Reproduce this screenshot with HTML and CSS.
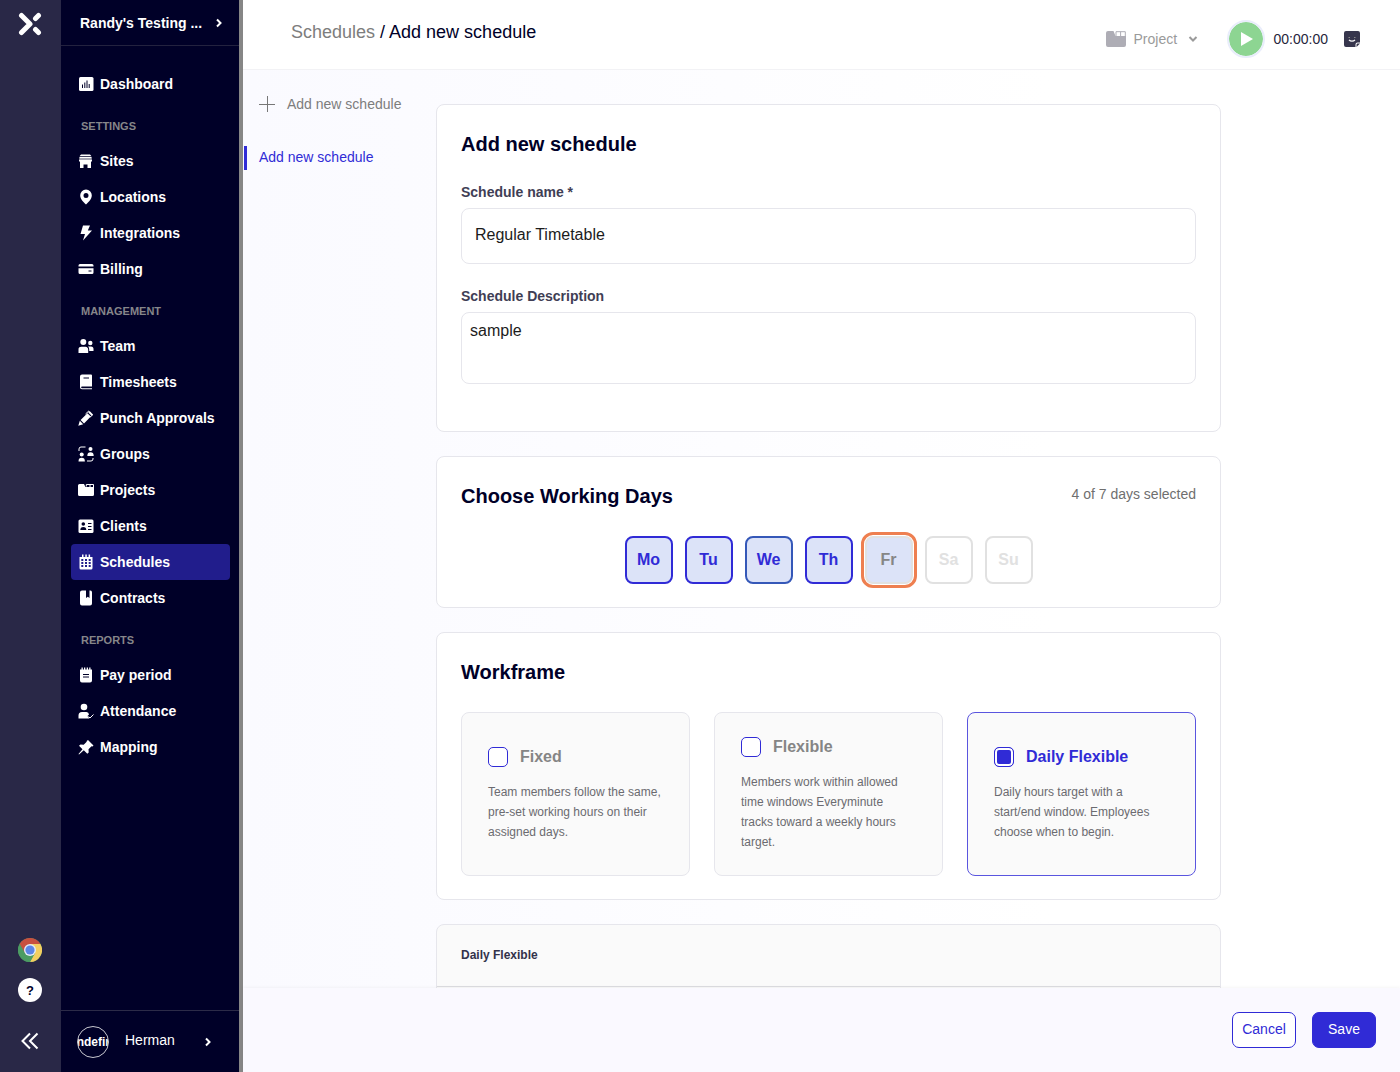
FILE: index.html
```html
<!DOCTYPE html>
<html lang="en">
<head>
  <meta charset="UTF-8" />
  <title>Add new schedule</title>
  <meta name="viewport" content="width=device-width, initial-scale=1.0" />
  <link rel="stylesheet" href="styles.css">
</head>
<body>
  <div class="rail">
    <svg class="logo" viewBox="0 0 24 24" width="24" height="24" fill="none" stroke="#fff" stroke-width="5" stroke-linecap="round">
      <path d="M3.5 3.5L12 12L3.5 20.5M17.500 6.500l3-3M17.500 17.500l3 3" stroke-linejoin="round"/>
    </svg>
    <div class="rail-bottom">
      <a href="#" aria-label="Chrome extension">
        <svg viewBox="0 0 24 24" width="24" height="24">
          <circle cx="12" cy="12" r="12" fill="#4c9c63"/>
          <path d="M12 6h10.4A12 12 0 0 1 12 24l5.2-9z" fill="#f3cf60"/>
          <path d="M1.6 6L6.8 15L12 12L12 6h10.4A12 12 0 0 0 1.6 6z" fill="#c8503f"/>
          <path d="M1.6 6L6.8 15L12 18l3 0L12 24A12 12 0 0 1 1.6 6z" fill="#4c9c63"/>
          <circle cx="12" cy="12" r="6" fill="#e4ebf7"/>
          <circle cx="12" cy="12" r="4.6" fill="#5c86e6"/>
        </svg>
      </a>
      <button class="help">?</button>
      <button class="collapse" aria-label="Collapse menu">
        <svg viewBox="0 0 18 18" width="18" height="18" fill="none" stroke="#fff" stroke-width="2"><path d="M9 1.5L1.5 9L9 16.5M16.5 1.5L9 9l7.5 7.5"/></svg>
      </button>
    </div>
  </div>

  <aside class="sidebar">
    <button class="workspace">
      <span>Randy's Testing ...</span>
      <svg viewBox="0 0 6 10" width="6" height="10" class="chevron"><path d="M1 1.5L4.5 5L1 8.5"/></svg>
    </button>

    <nav class="menu">
      <a href="#">
        <svg viewBox="0 0 16 16"><rect x="1" y="1" width="14.5" height="14" rx="1.5"/><path class="cut" d="M4.5 12V8.500M6.800 12V6.500M9 12V4.500M11.200 12V8"/></svg>
        Dashboard
      </a>
      <h3>SETTINGS</h3>
      <a href="#">
        <svg viewBox="0 0 16 16"><path d="M3 1.500h9l1.500 1.800h-12zM1.500 4h12l.5 3.500v1H1v-1zM2 8.500h11V15H9.500v-3.500h-4V15H2z"/><path class="cut" d="M1 6h13" stroke-width=".7"/></svg>
        Sites
      </a>
      <a href="#">
        <svg viewBox="0 0 16 16"><path fill-rule="evenodd" d="M8 .5a5.800 5.800 0 0 0-5.800 5.800C2.200 10.500 6 13.500 8 15.500c2-2 5.800-5 5.800-9.200A5.800 5.800 0 0 0 8 .5zm0 3.500a2.500 2.500 0 1 1 0 5 2.500 2.500 0 0 1 0-5z"/></svg>
        Locations
      </a>
      <a href="#">
        <svg viewBox="0 0 16 16"><path d="M5 .5h7L9.800 5.500H14L5 15.500l2-6.500H2.500z"/></svg>
        Integrations
      </a>
      <a href="#">
        <svg viewBox="0 0 16 16"><path d="M2 3h12a1.500 1.500 0 0 1 1.500 1.500V5.500H.5v-1A1.500 1.500 0 0 1 2 3zM.5 7.200h15v4.300A1.500 1.500 0 0 1 14 13H2a1.500 1.500 0 0 1-1.500-1.500z"/><path class="cut" d="M10.500 10h3"/></svg>
        Billing
      </a>
      <h3>MANAGEMENT</h3>
      <a href="#">
        <svg viewBox="0 0 16 16"><circle cx="5.300" cy="4" r="3"/><circle cx="12.300" cy="5" r="2.200"/><path d="M.5 15v-3a3 3 0 0 1 3-3.300h4a3 3 0 0 1 2.700 3V15zM10 8.500h3a2.500 2.500 0 0 1 2.500 2.500v2h-4.300v-1.500A4 4 0 0 0 10 8.500z"/></svg>
        Team
      </a>
      <a href="#">
        <svg viewBox="0 0 16 16"><path fill-rule="evenodd" d="M4 .5h9a1 1 0 0 1 1 1v11H4a.8.8 0 0 0 0 1.700h10v1H4a2 2 0 0 1-2-2V2.500a2 2 0 0 1 2-2z"/><path class="cut" d="M5.500 4h5.500"/></svg>
        Timesheets
      </a>
      <a href="#">
        <svg viewBox="0 0 16 16"><path d="M.3 15.700L1.800 10.800L5.200 14.200zM2.600 10L9.400 3.200L12.800 6.600L6 13.400zM10.200 2.400L11.600 1l3.400 3.400L13.600 5.800z"/><path d="M7.500 4L11 .8M12 7.200l3-2.700" fill="none" stroke="#fff"/></svg>
        Punch Approvals
      </a>
      <a href="#">
        <svg viewBox="0 0 16 16"><circle cx="3.700" cy="8.500" r="2"/><path d="M.5 15.500c0-3 1.200-3.800 3.200-3.800s3.200.8 3.200 3.800z"/><circle cx="12.500" cy="3" r="2"/><path d="M9.300 10c0-3 1.200-3.800 3.200-3.800s3.200.8 3.200 3.800z"/><path d="M1 5V3a2 2 0 0 1 2-2h4.500M15 12v1a2 2 0 0 1-2 2H9" fill="none" stroke="#fff"/></svg>
        Groups
      </a>
      <a href="#">
        <svg viewBox="0 0 16 16"><path d="M0 3.500A1.500 1.500 0 0 1 1.500 2H6l1.500 3H16v7.500a1.500 1.500 0 0 1-1.500 1.500h-13A1.500 1.500 0 0 1 0 12.500z"/><path d="M8.300 4.500v-2H15.500v3M12 2.500v3" fill="none" stroke="#fff"/></svg>
        Projects
      </a>
      <a href="#">
        <svg viewBox="0 0 16 16"><rect x=".5" y="1.500" width="15" height="13.500" rx="1.500"/><circle cx="5.300" cy="6" r="1.800" fill="#000028"/><path d="M2.300 12c0-2 1-3 3-3s3 1 3 3z" fill="#000028"/><path class="cut" d="M10 5.500h3.500M10 8.500h3.500M10 11.500h3.500"/></svg>
        Clients
      </a>
      <a href="#" class="active">
        <svg viewBox="0 0 16 16"><path d="M1.500 3h13v11a1.500 1.500 0 0 1-1.500 1.500H3A1.500 1.500 0 0 1 1.500 14zM4 .5h1.500v3H4zM7.300.5h1.500v3H7.300zM10.600.5h1.500v3h-1.500z"/><path class="cut" d="M3.300 6h2M7 6h2M10.700 6h2M3.300 9h2M7 9h2M10.700 9h2M3.300 12h2M7 12h2M10.700 12h2" stroke-width="1.800"/></svg>
        Schedules
      </a>
      <a href="#">
        <svg viewBox="0 0 16 16"><path d="M4 .5h4V8l1.800-1.300L11.500 8V.5A2 2 0 0 1 14 2.500v11a2 2 0 0 1-2 2H4a2 2 0 0 1-2-2v-11a2 2 0 0 1 2-2z"/></svg>
        Contracts
      </a>
      <h3>REPORTS</h3>
      <a href="#">
        <svg viewBox="0 0 16 16"><path d="M2 2.500h12v11a2 2 0 0 1-2 2H4a2 2 0 0 1-2-2zM3.500.5h1.300v3H3.500zM6 .5h1.300v3H6zM8.700.5H10v3H8.700zM11.200.5h1.300v3h-1.300z"/><path class="cut" d="M5 7.500h6M5 10h6"/></svg>
        Pay period
      </a>
      <a href="#">
        <svg viewBox="0 0 16 16"><circle cx="6" cy="4" r="3.300"/><path d="M.5 15.500v-3A3.500 3.500 0 0 1 4 9h4.500a3 3 0 0 1 2.500 2.500L9.500 13l2 2.500z"/><path d="M10.500 13.500l1.500 1.500 3.500-3.500" fill="none" stroke="#fff"/></svg>
        Attendance
      </a>
      <a href="#">
        <svg viewBox="0 0 16 16"><path d="M10 1l5.500 5.500-1 1-1-.2-3 3 .2 3.200-1.400 1.300-3.500-3.500L1 15.500l-.5-.5L4.500 10.200 1 6.700l1.500-1.200 3.200.2 3-3L8.700 2z"/></svg>
        Mapping
      </a>
    </nav>

    <button class="user">
      <span class="avatar">undefined</span>
      <span class="user-name">Herman</span>
      <svg viewBox="0 0 6 10" width="6" height="10" class="chevron"><path d="M1 1.5L4.5 5L1 8.5"/></svg>
    </button>
  </aside>

  <div class="page">
    <header class="topbar">
      <div class="breadcrumb"><a href="#">Schedules</a> / Add new schedule</div>
      <div class="timer">
        <label class="project">
          <svg viewBox="0 0 20 16" width="20" height="16" fill="#aeadb5"><path d="M0 2a2 2 0 0 1 2-2h5.500l2 5H20v9a2 2 0 0 1-2 2H2a2 2 0 0 1-2-2z"/><path d="M10 5V.7h9.300V5M14.600.7V5" fill="none" stroke="#aeadb5"/></svg>
          <select aria-label="Project"><option>Project</option></select>
          <svg viewBox="0 0 10 6" width="10" height="6" class="arrow"><path d="M1.500 1L5 4.500L8.500 1"/></svg>
        </label>
        <button class="play" aria-label="Start timer">
          <svg viewBox="0 0 12 14" width="12" height="14" fill="#fff"><path d="M0 0l12 7L0 14z"/></svg>
        </button>
        <span class="time">00:00:00</span>
        <button class="note" aria-label="Add note">
          <svg viewBox="0 0 16 16" width="16" height="16"><path d="M2 0h12a2 2 0 0 1 2 2v9.500h-2.500a2 2 0 0 0-2 2V16H2a2 2 0 0 1-2-2V2a2 2 0 0 1 2-2z" fill="#37364d"/><path d="M16 12.500L12.500 16V13.700a1.200 1.200 0 0 1 1.200-1.200z" fill="#37364d"/><path d="M5 8.800c1.500 1.800 4.500 1.800 6 0" fill="none" stroke="#fff" stroke-width="1.200"/><path d="M4.500 6.500h1.500M10 6.500h1.500" stroke="#888"/></svg>
        </button>
      </div>
    </header>

    <main class="content">
      <nav class="schedules">
        <a href="#" class="add">
          <svg viewBox="0 0 16 16" width="16" height="16" fill="none" stroke="#777"><path d="M8.500 0v16M0 8.500h16"/></svg>
          Add new schedule
        </a>
        <a href="#" class="current">Add new schedule</a>
      </nav>

      <form class="cards" id="schedule-form">
        <section class="card details">
          <h2>Add new schedule</h2>
          <label for="name">Schedule name *</label>
          <input type="text" id="name" value="Regular Timetable">
          <label for="description">Schedule Description</label>
          <textarea id="description">sample</textarea>
        </section>

        <section class="card">
          <div class="card-head">
            <h2>Choose Working Days</h2>
            <span>4 of 7 days selected</span>
          </div>
          <div class="days">
            <button type="button" class="day selected">Mo</button>
            <button type="button" class="day selected">Tu</button>
            <button type="button" class="day selected hover">We</button>
            <button type="button" class="day selected">Th</button>
            <button type="button" class="day focused">Fr</button>
            <button type="button" class="day">Sa</button>
            <button type="button" class="day">Su</button>
          </div>
        </section>

        <section class="card">
          <h2>Workframe</h2>
          <div class="options">
            <label class="option">
              <span class="option-title"><input type="checkbox"> Fixed</span>
              <span class="option-text">Team members follow the same, pre-set working hours on their assigned days.</span>
            </label>
            <label class="option">
              <span class="option-title"><input type="checkbox"> Flexible</span>
              <span class="option-text">Members work within allowed time windows Everyminute tracks toward a weekly hours target.</span>
            </label>
            <label class="option chosen">
              <span class="option-title"><input type="checkbox" checked> Daily Flexible</span>
              <span class="option-text">Daily hours target with a start/end window. Employees choose when to begin.</span>
            </label>
          </div>
        </section>

        <section class="panel">
          <h4>Daily Flexible</h4>
          <div class="panel-body"></div>
        </section>
      </form>
    </main>

    <footer class="actions">
      <button class="btn">Cancel</button>
      <button class="btn primary" form="schedule-form">Save</button>
    </footer>
  </div>
</body>
</html>
```
FILE: styles.css
```css
:root {
  --primary: #302bd6;
  --navy: #000028;
  --rail: #292847;
  --border: #e6e6ec;
  --grey: #7d7d7d;
}

* {
  box-sizing: border-box;
}

body {
  margin: 0;
  height: 100vh;
  display: flex;
  overflow: hidden;
  font-family: "Liberation Sans", Arial, sans-serif;
  font-size: 14px;
  color: var(--navy);
  background: #fff;
}

a {
  color: inherit;
  text-decoration: none;
}

button, input, textarea, select {
  font-family: inherit;
  font-size: 14px;
  color: inherit;
}

button {
  padding: 0;
  border: none;
  background: none;
  cursor: pointer;
}

h2, h3, h4 {
  margin: 0;
}

svg {
  display: block;
  flex-shrink: 0;
}

/* left rail */
.rail {
  width: 61px;
  flex-shrink: 0;
  display: flex;
  flex-direction: column;
  justify-content: space-between;
  align-items: center;
  padding: 12px 1px 22px 0;
  background: var(--rail);
}

.rail-bottom {
  display: flex;
  flex-direction: column;
  align-items: center;
  gap: 16px;
}

.help {
  width: 24px;
  height: 24px;
  border-radius: 50%;
  background: #fff;
  color: var(--navy);
  font-size: 13px;
  font-weight: bold;
}

.collapse {
  margin-top: 14px;
}

/* sidebar */
.sidebar {
  width: 182px;
  flex-shrink: 0;
  display: flex;
  flex-direction: column;
  border-right: 4px solid #868686;
  background: var(--navy);
  color: #fff;
}

.workspace {
  height: 46px;
  display: flex;
  justify-content: space-between;
  align-items: center;
  padding: 0 17px 0 19px;
  border-bottom: 1px solid #23223f;
  font-weight: bold;
}

.chevron {
  fill: none;
  stroke: #fff;
  stroke-width: 2;
}

.menu {
  flex: 1;
  padding: 20px 9px 0 10px;
}

.menu a {
  height: 36px;
  display: flex;
  align-items: center;
  gap: 6px;
  padding-left: 7px;
  border-radius: 4px;
  font-weight: bold;
}

.menu a.active {
  background: #211d8c;
}

.menu svg {
  width: 16px;
  height: 16px;
  fill: #fff;
}

.menu .cut {
  fill: none;
  stroke: var(--navy);
}

.menu .active .cut {
  stroke: #211d8c;
}

.menu h3 {
  height: 41px;
  padding: 16px 0 0 10px;
  font-size: 11px;
  line-height: 16px;
  color: #86868a;
}

.user {
  height: 62px;
  display: flex;
  align-items: center;
  padding: 0 28px 0 16px;
  border-top: 1px solid #2c2b48;
}

.avatar {
  width: 32px;
  height: 32px;
  display: flex;
  align-items: center;
  justify-content: center;
  padding-left: 10px;
  border: 1px solid #c8c8d0;
  border-radius: 50%;
  overflow: hidden;
  font-size: 12px;
  font-weight: bold;
}

.user-name {
  flex: 1;
  padding: 0 0 3px 16px;
  text-align: left;
}

/* top bar */
.page {
  flex: 1;
  min-width: 0;
  display: flex;
  flex-direction: column;
}

.topbar {
  height: 70px;
  flex-shrink: 0;
  display: flex;
  justify-content: space-between;
  padding: 20px 40px 0 48px;
  border-bottom: 1px solid #f2f2f5;
}

.breadcrumb {
  font-size: 18px;
  line-height: 24px;
}

.breadcrumb a {
  color: var(--grey);
}

.timer {
  height: 38px;
  display: flex;
  align-items: center;
}

.project {
  display: flex;
  align-items: center;
  margin-right: 29px;
}

.project select {
  width: 54px;
  margin-left: 8px;
  padding: 0;
  border: none;
  background: none;
  appearance: none;
  color: #9a9a9a;
}

.arrow {
  fill: none;
  stroke: #9a9a9a;
  stroke-width: 2;
}

.play {
  width: 38px;
  height: 38px;
  display: flex;
  align-items: center;
  justify-content: center;
  padding-left: 3px;
  border: 2px solid #e9edfb;
  border-radius: 50%;
  background: #8dd592;
  background-clip: padding-box;
}

.time {
  margin: 0 16px 0 9px;
  color: #26253c;
}

/* content */
.content {
  flex: 1;
  min-height: 0;
  display: grid;
  grid-template-columns: 193px minmax(0, 1fr) 179px;
  overflow: hidden;
  background: linear-gradient(to right, #fafaff, #fff 70%);
}

.schedules {
  padding-top: 22px;
}

.schedules a {
  display: flex;
  align-items: center;
  line-height: 24px;
}

.add {
  gap: 12px;
  padding-left: 16px;
  color: var(--grey);
}

.schedules .current {
  height: 24px;
  margin: 30px 0 0 1px;
  padding: 0 0 2px 12px;
  border-left: 3px solid var(--primary);
  color: var(--primary);
}

.cards {
  display: flex;
  flex-direction: column;
  gap: 24px;
  padding-top: 34px;
}

.card {
  flex-shrink: 0;
  padding: 23px 24px;
  border: 1px solid var(--border);
  border-radius: 8px;
  background: #fff;
}

.card h2 {
  font-size: 20px;
  line-height: 32px;
}

.details {
  padding-bottom: 47px;
}

.details label {
  display: block;
  margin: 22px 0 6px;
  line-height: 20px;
  font-weight: bold;
  color: #3f3e55;
}

.details input, .details textarea {
  display: block;
  width: 100%;
  border: 1px solid var(--border);
  border-radius: 8px;
  background: #fff;
  font-size: 16px;
  color: #1c1c1c;
}

.details input {
  height: 56px;
  padding: 0 13px 2px;
}

.details textarea {
  height: 72px;
  padding: 8px;
  line-height: 20px;
  resize: none;
}

.card-head {
  display: flex;
  justify-content: space-between;
  line-height: 28px;
}

.card-head span {
  color: #6f6f6f;
}

.days {
  display: flex;
  justify-content: center;
  gap: 12px;
  margin-top: 24px;
}

.day {
  width: 48px;
  height: 48px;
  border: 2px solid #e1e1e1;
  border-radius: 8px;
  background: #fff;
  font-size: 16px;
  font-weight: bold;
  color: #e1e1e1;
}

.day.selected {
  border-color: var(--primary);
  background: #dce3f8;
  color: var(--primary);
}

.day.hover {
  border-color: #3558b8;
}

.day.focused {
  background: #dce3f8;
  color: #868686;
  outline: 3px solid #ee7f50;
  outline-offset: 1px;
}

/* workframe */
.options {
  display: grid;
  grid-template-columns: repeat(3, 1fr);
  gap: 24px;
  margin-top: 24px;
}

.option {
  min-height: 164px;
  display: flex;
  flex-direction: column;
  justify-content: center;
  gap: 15px;
  padding: 0 26px;
  border: 1px solid var(--border);
  border-radius: 8px;
  background: #fafafa;
}

.option.chosen {
  border-color: #5a55df;
}

.option-title {
  display: flex;
  align-items: center;
  gap: 12px;
  line-height: 20px;
  font-size: 16px;
  font-weight: bold;
  color: #858585;
}

.chosen .option-title {
  color: var(--primary);
}

.option-title input {
  width: 20px;
  height: 20px;
  margin: 0;
  appearance: none;
  border: 1px solid var(--primary);
  border-radius: 5px;
  background: #fff;
}

.option-title input:checked {
  background: var(--primary);
  box-shadow: inset 0 0 0 2px #fff;
}

.option-text {
  font-size: 12px;
  line-height: 20px;
  color: #6b6b70;
}

.panel {
  flex-shrink: 0;
  border: 1px solid var(--border);
  border-radius: 8px;
  background: #fafafa;
}

.panel h4 {
  padding: 0 24px;
  font-size: 12px;
  line-height: 61px;
  color: #33324a;
}

.panel-body {
  height: 200px;
  border-top: 1px solid #dcdce0;
}

/* footer */
.actions {
  display: flex;
  justify-content: flex-end;
  gap: 16px;
  padding: 24px;
  background: #faf9ff;
  box-shadow: 0 -1px 3px #0000000a;
}

.btn {
  width: 64px;
  height: 36px;
  padding-bottom: 2px;
  border: 1px solid var(--primary);
  border-radius: 7px;
  background: #fff;
  color: var(--primary);
}

.btn.primary {
  background: var(--primary);
  color: #fff;
}
```
